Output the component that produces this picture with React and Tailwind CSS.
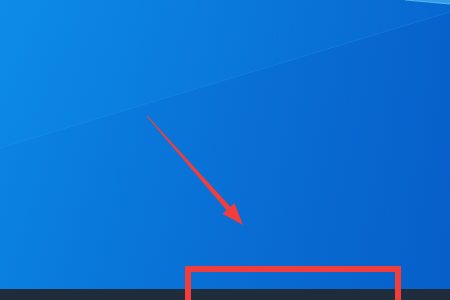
export default function App() {
  return (
    <div className="relative w-[450px] h-[300px] overflow-hidden flex flex-col">
      {/* desktop wallpaper */}
      <div className="relative flex-1 bg-gradient-to-r from-[#0b88e6] via-[#0a76da] to-[#0864ce]">
        <svg className="absolute inset-0" width="450" height="289" viewBox="0 0 450 289">
          <defs>
            <linearGradient id="lit" x1="0" y1="0" x2="1" y2="0">
              <stop offset="0" stopColor="#0d8cea" stopOpacity="0.8" />
              <stop offset="0.6" stopColor="#0b82e2" stopOpacity="0.45" />
              <stop offset="1" stopColor="#0a7cde" stopOpacity="0.3" />
            </linearGradient>
            <linearGradient id="dark" x1="0" y1="0" x2="1" y2="1">
              <stop offset="0" stopColor="#0658c4" stopOpacity="0" />
              <stop offset="1" stopColor="#0556c2" stopOpacity="0.35" />
            </linearGradient>
          </defs>
          <polygon points="0,0 450,0 450,12 0,148" fill="url(#lit)" />
          <line x1="0" y1="148" x2="450" y2="12" stroke="#2a9cf0" strokeOpacity="0.35" strokeWidth="1" />
          <rect x="0" y="0" width="450" height="289" fill="url(#dark)" />
          <polygon points="410,0 450,0 450,4" fill="#4fc0f8" fillOpacity="0.6" />
          <line x1="405" y1="0" x2="450" y2="4" stroke="#8ee0ff" strokeOpacity="0.55" strokeWidth="1.2" />
        </svg>
        {/* red arrow */}
        <svg className="absolute inset-0" width="450" height="289" viewBox="0 0 450 289">
          <polygon points="147.4,115.7 146.6,116.3 226.6,210.2 230.4,206.8" fill="#f23d3d" />
          <polygon points="234.5,203.2 222.5,213.8 243,225" fill="#f23d3d" />
        </svg>
      </div>
      {/* taskbar */}
      <div className="h-[11px] bg-[#1f2c3b]" />
      {/* highlight box */}
      <div className="absolute left-[185px] top-[266px] w-[216px] h-[40px] border-[6px] border-b-0 border-[#f23d3d]" />
    </div>
  )
}
